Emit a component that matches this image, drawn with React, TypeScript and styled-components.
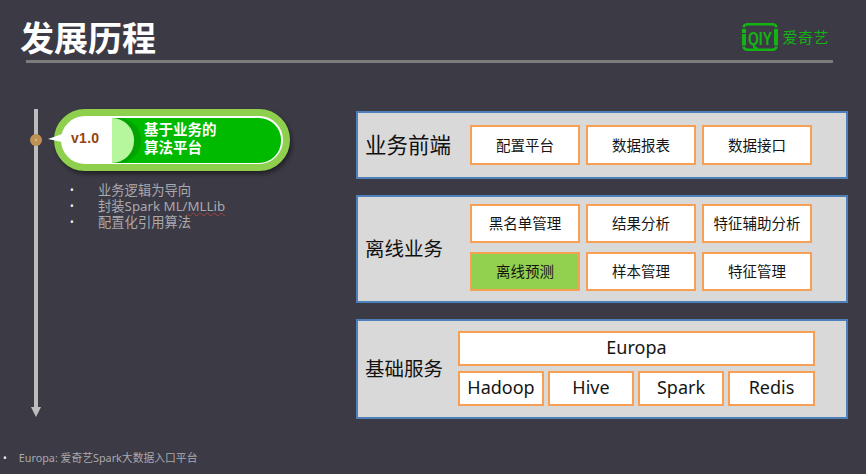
import React from "react";
import styled, { createGlobalStyle } from "styled-components";

const Global = createGlobalStyle`
  html, body { margin: 0; padding: 0; background: #3c3a45; }
  #root { width: 866px; height: 474px; overflow: hidden; }
`;

const FONT = `"Noto Sans", "Noto Sans CJK SC", sans-serif`;
const CJK = `"Noto Sans CJK SC", "Noto Sans", sans-serif`;

const Slide = styled.div`
  width: 866px;
  height: 474px;
  background: #3c3a45;
  font-family: ${FONT};
  display: flex;
  flex-direction: column;
  position: relative;
`;

const Header = styled.header`
  height: 60px;
  padding-left: 20px;
  padding-right: 37px;
  display: flex;
  justify-content: space-between;
  align-items: flex-start;
`;

const Title = styled.h1`
  margin: 14px 0 0;
  font-family: ${CJK};
  font-size: 34px;
  line-height: 46px;
  font-weight: 700;
  color: #fff;
`;

const Logo = styled.div`
  margin-top: 23px;
  display: flex;
  align-items: center;
  gap: 4px;
  height: 28px;
`;

const LogoName = styled.span`
  font-family: ${CJK};
  font-size: 15px;
  line-height: 28px;
  color: #12b312;
  letter-spacing: 0.5px;
`;

const Rule = styled.div`
  height: 3px;
  margin: 0 33px 0 26px;
  background: #7b7b7b;
  flex: none;
`;

const Body = styled.main`
  flex: 1;
  display: flex;
  min-height: 0;
`;

const Left = styled.section`
  width: 356px;
  flex: none;
  padding: 46px 0 0 34px;
  box-sizing: border-box;
  display: flex;
  gap: 16px;
`;

const Axis = styled.div`
  width: 4px;
  height: 301px;
  background: #bdbdbd;
  position: relative;
  flex: none;
  &::after {
    content: "";
    position: absolute;
    left: -3.5px;
    bottom: -7px;
    border-left: 5.5px solid transparent;
    border-right: 5.5px solid transparent;
    border-top: 10px solid #bdbdbd;
  }
`;

const Dot = styled.div`
  position: absolute;
  left: -4px;
  top: 25px;
  width: 12px;
  height: 12px;
  border-radius: 50%;
  background: #be9255;
  &::after {
    content: "";
    position: absolute;
    left: 5px;
    top: 5px;
    width: 2px;
    height: 2px;
    background: #d8b98c;
  }
`;

const Version = styled.div`
  width: 236px;
`;

const Pill = styled.div`
  width: 236px;
  height: 62px;
  box-sizing: border-box;
  border: 7px solid #8fcf4e;
  border-radius: 31px;
  background: #fff;
  box-shadow: 2px 3px 4px rgba(0, 0, 0, 0.45);
  position: relative;
  &::before {
    content: "";
    position: absolute;
    left: -13px;
    top: 18px;
    border-top: 5px solid transparent;
    border-bottom: 3px solid transparent;
    border-right: 14px solid #fff;
    width: 0;
    height: 0;
  }
`;

const PillInner = styled.div`
  height: 100%;
  border-radius: 24px;
  overflow: hidden;
  display: flex;
  position: relative;
`;

const VersionCap = styled.div`
  width: 51px;
  flex: none;
  padding-left: 10px;
  box-sizing: border-box;
  font-family: "Liberation Sans", sans-serif;
  font-weight: 700;
  font-size: 14px;
  line-height: 44px;
  letter-spacing: 0.3px;
  color: #96440f;
`;

const PillFill = styled.div`
  flex: 1;
  margin: 1.5px 2px 1.5px 0;
  border-radius: 0 22px 22px 0;
  background: #00ba00;
  position: relative;
  display: flex;
  align-items: center;
  padding-left: 32px;
  overflow: hidden;
  &::before {
    content: "";
    position: absolute;
    left: -1px;
    top: 0;
    width: 30px;
    height: 100%;
    border-radius: 0 22px 22px 0;
    background: #00a300;
  }
  &::after {
    content: "";
    position: absolute;
    left: -1px;
    top: 0;
    width: 23px;
    height: 100%;
    border-radius: 0 22px 22px 0;
    background: #b6f79d;
  }
`;

const PillText = styled.div`
  font-family: ${CJK};
  color: #fff;
  font-size: 14.5px;
  line-height: 18px;
  font-weight: 700;
  white-space: nowrap;
  position: relative;
  z-index: 1;
  margin-bottom: 5px;
`;

const Bullets = styled.ul`
  margin: 11px 0 0;
  padding: 0;
  list-style: none;
  color: #a9a9ae;
  font-size: 13.3px;
  line-height: 16px;
`;

const Bullet = styled.li`
  display: flex;
  gap: 24px;
  padding-left: 16px;
  &::before {
    content: "•";
    color: #f2f2f2;
    width: 4px;
    font-size: 10px;
  }
`;

const Spell = styled.span`
  text-decoration: underline wavy #a5433f 1px;
  text-underline-offset: 1px;
`;

const Right = styled.section`
  display: flex;
  flex-direction: column;
  gap: 16px;
  padding-top: 48px;
`;

const Panel = styled.div<{ $h: number }>`
  width: 492px;
  height: ${(p) => p.$h}px;
  box-sizing: border-box;
  background: #d9d9d9;
  border: 2px solid #4d7fb9;
  display: flex;
  align-items: center;
  padding-left: 7px;
  flex: none;
`;

const PanelLabel = styled.div<{ $w: number; $size: number }>`
  width: ${(p) => p.$w}px;
  flex: none;
  padding-bottom: 2px;
  font-family: ${CJK};
  font-size: ${(p) => p.$size}px;
  line-height: 28px;
  color: #111;
  white-space: nowrap;
`;

const Cells = styled.div<{ $gap: number; $shift: number }>`
  display: flex;
  flex-direction: column;
  gap: ${(p) => p.$gap}px;
  margin-bottom: ${(p) => p.$shift}px;
`;

const Row = styled.div<{ $gap: number }>`
  display: flex;
  gap: ${(p) => p.$gap}px;
`;

const Cell = styled.div<{ $w: number; $h: number; $active?: boolean }>`
  width: ${(p) => p.$w}px;
  height: ${(p) => p.$h}px;
  box-sizing: border-box;
  border: 2px solid #f79f55;
  background: ${(p) => (p.$active ? "#92d14f" : "#fff")};
  display: flex;
  align-items: center;
  justify-content: center;
  padding-bottom: 2px;
  color: #151515;
  font-family: ${CJK};
  font-size: 14.5px;
  white-space: nowrap;
`;

const LatinCell = styled(Cell)`
  font-family: ${FONT};
  font-size: 18px;
  padding-bottom: 2px;
`;

const Footnote = styled.div`
  position: absolute;
  left: 3px;
  bottom: 8px;
  display: flex;
  gap: 12px;
  font-size: 10.8px;
  line-height: 16px;
  color: #a9a9ae;
  &::before {
    content: "•";
    color: #f2f2f2;
    font-size: 10px;
  }
`;

const LogoLetters = styled.text`
  font-family: "Liberation Sans", sans-serif;
  font-weight: 700;
  font-size: 19px;
  fill: #12b312;
`;

const IqiyiMark = () => (
  <svg width="36" height="28" viewBox="0 0 36 28" aria-hidden="true">
    <path
      d="M1.5 4.5Q2 1.2 6.5 1.2H29.5Q34 1.2 34.5 4.5M1.5 23.5Q2 26.8 6.5 26.8H29.5Q34 26.8 34.5 23.5"
      fill="none"
      stroke="#12b312"
      strokeWidth="2.6"
    />
    <path d="M0 6h4v4h-4zM0 11h4v11.5h-4zM32 6h4v16.5h-4z" fill="#12b312" />
    <LogoLetters x="18" y="21.8" textAnchor="middle" textLength="24" lengthAdjust="spacingAndGlyphs">
      QIY
    </LogoLetters>
  </svg>
);

export default function App() {
  return (
    <Slide>
      <Global />
      <Header>
        <Title>发展历程</Title>
        <Logo>
          <IqiyiMark />
          <LogoName>爱奇艺</LogoName>
        </Logo>
      </Header>
      <Rule />
      <Body>
        <Left>
          <Axis>
            <Dot />
          </Axis>
          <Version>
            <Pill>
              <PillInner>
                <VersionCap>v1.0</VersionCap>
                <PillFill>
                  <PillText>
                    基于业务的
                    <br />
                    算法平台
                  </PillText>
                </PillFill>
              </PillInner>
            </Pill>
            <Bullets>
              <Bullet>
                <span>业务逻辑为导向</span>
              </Bullet>
              <Bullet>
                <span>
                  封装Spark ML/<Spell>MLLib</Spell>
                </span>
              </Bullet>
              <Bullet>
                <span>配置化引用算法</span>
              </Bullet>
            </Bullets>
          </Version>
        </Left>
        <Right>
          <Panel $h={68}>
            <PanelLabel $w={105} $size={21.5}>业务前端</PanelLabel>
            <Cells $gap={8} $shift={0}>
              <Row $gap={6}>
                <Cell $w={110} $h={40}>配置平台</Cell>
                <Cell $w={110} $h={40}>数据报表</Cell>
                <Cell $w={110} $h={40}>数据接口</Cell>
              </Row>
            </Cells>
          </Panel>
          <Panel $h={108}>
            <PanelLabel $w={105} $size={19.5}>离线业务</PanelLabel>
            <Cells $gap={9} $shift={3}>
              <Row $gap={6}>
                <Cell $w={110} $h={39}>黑名单管理</Cell>
                <Cell $w={110} $h={39}>结果分析</Cell>
                <Cell $w={110} $h={39}>特征辅助分析</Cell>
              </Row>
              <Row $gap={6}>
                <Cell $w={110} $h={39} $active>离线预测</Cell>
                <Cell $w={110} $h={39}>样本管理</Cell>
                <Cell $w={110} $h={39}>特征管理</Cell>
              </Row>
            </Cells>
          </Panel>
          <Panel $h={100}>
            <PanelLabel $w={93} $size={19.5}>基础服务</PanelLabel>
            <Cells $gap={5} $shift={2}>
              <Row $gap={0}>
                <LatinCell $w={357} $h={35}>Europa</LatinCell>
              </Row>
              <Row $gap={4}>
                <LatinCell $w={86} $h={35}>Hadoop</LatinCell>
                <LatinCell $w={86} $h={35}>Hive</LatinCell>
                <LatinCell $w={86} $h={35}>Spark</LatinCell>
                <LatinCell $w={87} $h={35}>Redis</LatinCell>
              </Row>
            </Cells>
          </Panel>
        </Right>
      </Body>
      <Footnote>
        <span>Europa: 爱奇艺Spark大数据入口平台</span>
      </Footnote>
    </Slide>
  );
}
